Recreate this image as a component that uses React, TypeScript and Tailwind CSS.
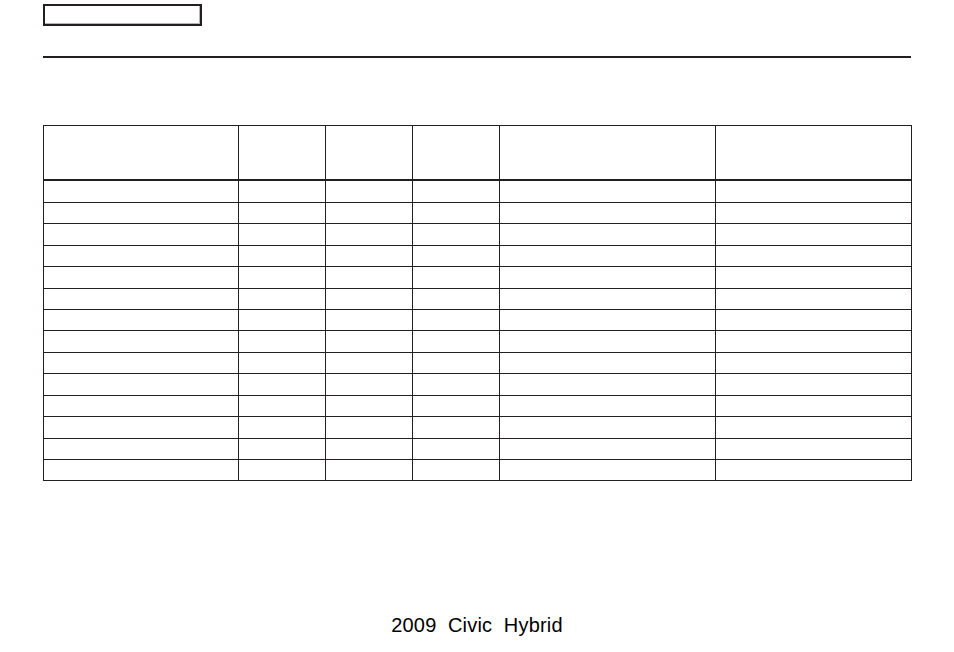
const cols = ["w-[195px]", "w-[87px]", "w-[87px]", "w-[87px]", "w-[216px]", "w-[196px]"];

// row heights chosen so the rules land where the printed table has them
const rowHeights = [
  "h-[22px]", "h-[21px]", "h-[22px]", "h-[21px]", "h-[22px]", "h-[21px]", "h-[21px]",
  "h-[22px]", "h-[21px]", "h-[22px]", "h-[21px]", "h-[22px]", "h-[21px]", "h-[21px]",
];

function Row({ height, thick }: { height: string; thick?: boolean }) {
  return (
    <div className={`flex ${height} ${thick ? "border-b-2" : "border-b"} border-[#231f20]`}>
      {cols.map((w, i) => (
        <div key={i} className={`${w} shrink-0 border-r border-[#231f20]`} />
      ))}
    </div>
  );
}

export default function App() {
  return (
    <div className="w-[954px] h-[652px] bg-white px-[43px] pt-[4px] font-['Liberation_Sans',Arial,sans-serif] text-[#231f20]">
      {/* tab box */}
      <div className="w-[159px] h-[22px] border-2 border-[#231f20] shadow-[inset_-1px_-1px_0_#b5b5b5]" />

      {/* rule under the header */}
      <div className="mt-[30px] h-[2px] w-[868px] bg-[#231f20]" />

      {/* empty spec table */}
      <div className="mt-[67px] w-[869px] border-t border-l border-[#231f20]">
        <Row height="h-[55px]" thick />
        {rowHeights.map((h, i) => (
          <Row key={i} height={h} />
        ))}
      </div>

      <div className="mt-[132px] text-center text-[20px] leading-[24px] tracking-[0.2px] text-black whitespace-pre">
        2009  Civic  Hybrid
      </div>
    </div>
  );
}
